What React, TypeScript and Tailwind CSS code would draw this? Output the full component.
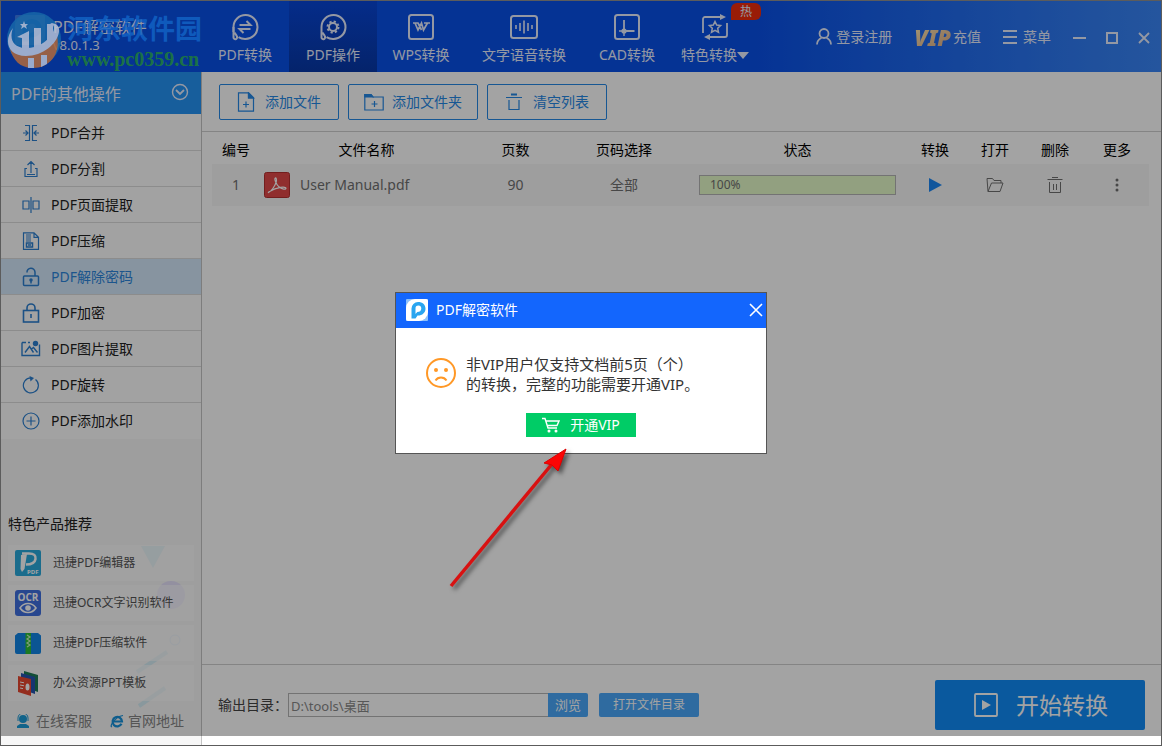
import { useState, type ReactNode } from 'react';
import { clsx } from 'clsx';

type IconProps = { className?: string };

const stroke = {
  fill: 'none',
  stroke: 'currentColor',
  strokeWidth: 1.2,
};

/* ---------- Top bar icons ---------- */

const ConvertIcon = () => (
  <svg viewBox="0 0 28 28" className="h-7 w-7" {...stroke} strokeWidth={2}>
    <path d="M2.500 19v-5A12 12 0 1 1 14 26c-2.400 0-4.600-.7-6.500-1.900" />
    <path d="M2.500 14v10.500a1.800 1.800 0 1 0 3.500-.7c0-1.500-1.600-2.800-2.600-4.300" />
    <path d="M8.500 12h11l-4-4M19.500 16h-11l4 4" />
  </svg>
);

const OperateIcon = () => (
  <svg viewBox="0 0 28 28" className="h-7 w-7" {...stroke} strokeWidth={2}>
    <path d="M2.500 14A12 12 0 1 1 14 26c-2.400 0-4.600-.7-6.500-1.900" />
    <path d="M2.500 14v10.500a1.800 1.800 0 1 0 3.500-.7c0-1.500-1.600-2.800-2.600-4.300" />
    <circle cx="14" cy="14" r="4" />
    <circle cx="14" cy="14" r="5.500" strokeDasharray="2.200 2.120" />
  </svg>
);

const WpsIcon = () => (
  <svg viewBox="0 0 28 28" className="h-7 w-7" {...stroke} strokeWidth={2}>
    <rect x="2" y="2" width="24" height="24" rx="2.500" />
    <path d="M6 10h5.500M17 10h6M8 10l3 7 3.500-7 2 7 4-7M11 10l3.500 7" strokeWidth={1.700} />
  </svg>
);

const VoiceIcon = () => (
  <svg viewBox="0 0 28 28" className="h-7 w-7" {...stroke} strokeWidth={2}>
    <rect x="1" y="3" width="26" height="22" rx="2.500" />
    <path d="M6 12v4M10 10v8M14 7.500v13M18 10v8M22 12v4" strokeWidth={1.600} />
  </svg>
);

const CadIcon = () => (
  <svg viewBox="0 0 28 28" className="h-7 w-7" {...stroke} strokeWidth={2}>
    <rect x="2" y="2" width="24" height="24" rx="2.500" />
    <path d="M11 7v11h10.500" strokeWidth={1.800} />
    <circle cx="11" cy="18" r="2.600" fill="currentColor" stroke="none" />
    <path d="M6 18h5v5" strokeWidth={1.400} />
  </svg>
);

const SpecialIcon = () => (
  <svg viewBox="0 0 28 28" className="h-7 w-7" {...stroke} strokeWidth={2}>
    <path d="M2 20V6a2 2 0 0 1 2-2h16M26 10v12a2 2 0 0 1-2 2H8" strokeWidth={1.800} />
    <path d="M19 1l6 3-6 3zM9 21l-6 3 6 3z" fill="currentColor" stroke="none" />
    <path d="M14 8.500l1.700 3.600 3.900.5-2.900 2.700.8 3.900-3.500-1.900-3.500 1.900.8-3.900-2.900-2.700 3.900-.5z" strokeWidth={1.500} />
  </svg>
);

const UserIcon = () => (
  <svg viewBox="0 0 16 17" className="h-[17px] w-4" {...stroke} strokeWidth={1.800}>
    <circle cx="8" cy="5.500" r="4.500" />
    <path d="M1 16.500c0-3.500 2-5.500 4.500-6.800M15 16.500c0-3.500-2-5.500-4.500-6.800" />
  </svg>
);

/* ---------- Sidebar icons ---------- */

const MergeIcon = () => (
  <svg viewBox="0 0 18 18" className="h-[18px] w-[18px]" {...stroke}>
    <path d="M3 1.500h4.500v15H3M15 1.500h-4.500v15H15M1 9h4.500M17 9h-4.500M3.500 6.500L6 9l-2.500 2.500M14.500 6.500L12 9l2.500 2.500" />
  </svg>
);

const SplitIcon = () => (
  <svg viewBox="0 0 18 18" className="h-[18px] w-[18px]" {...stroke}>
    <path d="M5 8.500H3v8h12v-8h-2M9 13V1.500M5.500 5L9 1.500 12.500 5M5 14.500h8" />
  </svg>
);

const ExtractIcon = () => (
  <svg viewBox="0 0 18 18" className="h-[18px] w-[18px]" {...stroke}>
    <path d="M1 5h6v8H1zM11 5h6v8h-6zM9 1v16" />
  </svg>
);

const CompressIcon = () => (
  <svg viewBox="0 0 18 18" className="h-[18px] w-[18px]" {...stroke}>
    <path d="M1.500.8h10.500l4.500 4.500v12H1.500zM12 .8v4.500h4.500" />
    <path d="M4 3h5M4 5h5M4 7h5M4 9h5" strokeWidth={1.200} />
    <path d="M4.500 11h6v4h-6zM6 13h3" strokeWidth={1.500} />
  </svg>
);

const UnlockIcon = () => (
  <svg viewBox="0 0 18 18" className="h-5 w-[18px]" {...stroke} strokeWidth={1.500}>
    <rect x="1.500" y="8" width="15" height="9.500" rx="1" />
    <path d="M5 4.500a4 4 0 0 1 8-.5v4M9 12.500v3" />
    <circle cx="9" cy="12" r="1" fill="currentColor" />
  </svg>
);

const LockIcon = () => (
  <svg viewBox="0 0 18 20" className="h-5 w-[18px]" {...stroke} strokeWidth={1.600}>
    <rect x="1.500" y="7.500" width="15" height="11.500" />
    <path d="M5 7.500V5a4 4 0 0 1 8 0v2.500M9 11v4" />
  </svg>
);

const PictureIcon = () => (
  <svg viewBox="0 0 20 18" className="h-[18px] w-5" {...stroke} strokeWidth={1.400}>
    <path d="M1 2.500v13h17.500v-11M5 2.500H1M9 2.500H7M4 12.500l4.500-6 4 6M10.500 9l2-1.500 4 5" />
    <circle cx="14.500" cy="3.500" r="2.700" fill="currentColor" stroke="none" />
  </svg>
);

const RotateIcon = () => (
  <svg viewBox="0 0 18 18" className="h-[18px] w-[18px]" {...stroke}>
    <path d="M13.500 3.500A7.500 7.500 0 1 1 9 1.900" />
    <path d="M7.500 0l4.500 2-3.500 3.500z" fill="currentColor" stroke="none" />
  </svg>
);

const PlusCircleIcon = () => (
  <svg viewBox="0 0 18 18" className="h-[18px] w-[18px]" {...stroke}>
    <circle cx="9" cy="9" r="8" />
    <path d="M9 4.500v9M4.500 9h9" />
  </svg>
);

/* ---------- Toolbar and table icons ---------- */

const AddFileIcon = () => (
  <svg viewBox="0 0 18 20" className="h-5 w-[18px]" {...stroke}>
    <path d="M1.500.8h10l5 5v13.400h-15zM11.500.8v5h5M9 9.500v6M6 12.500h6" />
    <path d="M11.500.8v5h5z" fill="currentColor" />
  </svg>
);

const AddFolderIcon = () => (
  <svg viewBox="0 0 20 18" className="h-[18px] w-5" {...stroke}>
    <path d="M.8 1.500v15.500h18.400V4H9L7 1.500zM10.500 8v6M7.500 11h6" />
    <path d="M.8 1.500H7L9 4H.8z" fill="currentColor" />
  </svg>
);

const ClearIcon = () => (
  <svg viewBox="0 0 18 18" className="h-[18px] w-[18px]" {...stroke}>
    <path d="M1 4.500h16M4 7v9.500h10V7" />
    <path d="M6 1.500h6" strokeWidth={2} />
  </svg>
);

const PdfIcon = () => (
  <svg viewBox="0 0 26 26" className="h-[26px] w-[26px] shrink-0">
    <rect x=".5" y=".5" width="25" height="25" rx="2" fill="#e14848" stroke="#b53030" />
    <path
      d="M4.500 20.500c2.500-1 6.500-6 7.800-11 .5-2-.2-4-1-3.500-1.300.8.800 6.500 4.200 9.300 2.500 2 6.500 2.500 6.500 1 0-2-9-1.400-16.500 3.200-.8.500-1.400 1.200-1 1z"
      fill="none"
      stroke="#fff"
      strokeWidth="1.200"
    />
  </svg>
);

const FolderOpenIcon = () => (
  <svg viewBox="0 0 18 16" className="mx-auto h-4 w-[18px]" {...stroke} strokeWidth={1}>
    <path d="M2 14.500l-1-13h5.500l1.500 2h7v2.500M2 14.500L5.500 6h11.500l-3 8.500z" />
  </svg>
);

const TrashIcon = () => (
  <svg viewBox="0 0 16 18" className="mx-auto h-[18px] w-4" {...stroke} strokeWidth={1}>
    <path d="M.5 3.500h15M5 1.500h6M2.500 6v10.500h11V6M6.500 8v6M9.500 8v6" />
  </svg>
);

/* ---------- Product icons ---------- */

const EditorLogo = () => (
  <svg viewBox="0 0 26 26" className="h-[26px] w-[26px]">
    <rect width="26" height="26" rx="2" fill="#2aa9dc" />
    <path d="M7 3.500h7c5 0 7 2 6.500 5.500-.5 3.500-4 5.500-9.500 5.500" fill="none" stroke="#fff" strokeWidth="2.500" />
    <path d="M6 5l6-1-2.500 15L7 22l-1.500-3z" fill="#fff" />
    <text x="12" y="24" fontSize="6" fontWeight="700" fontFamily="Open Sans" fill="#fff">PDF</text>
  </svg>
);

const OcrLogo = () => (
  <svg viewBox="0 0 26 26" className="h-[26px] w-[26px]">
    <rect width="26" height="26" rx="3" fill="#3f6fe0" />
    <text x="13" y="10.500" textAnchor="middle" fontSize="10" fontWeight="700" fontFamily="Open Sans" fill="#fff">OCR</text>
    <path d="M5 18c4-6 12-6 16 0-4 6-12 6-16 0z" fill="none" stroke="#fff" strokeWidth="1.600" />
    <circle cx="13" cy="18" r="2.800" fill="#fff" />
  </svg>
);

const ZipLogo = () => (
  <svg viewBox="0 0 26 26" className="h-[26px] w-[26px]">
    <path d="M0 5.500l3-2.500h20l3 2.500V22a2 2 0 0 1-2 2H2a2 2 0 0 1-2-2z" fill="#1285e6" />
    <path d="M10.500 3H16v21h-5.500z" fill="#2dbf36" />
    <path d="M12 5l3 2-3 2 3 2-3 2 3 2-3 2" fill="none" stroke="#c5f4c4" strokeWidth="1.200" />
  </svg>
);

const PptLogo = () => (
  <svg viewBox="0 0 26 26" className="h-[26px] w-[26px]">
    <path d="M9 1l14 4v17L9 17z" fill="#1d7b55" />
    <path d="M6 3l14 4v17L6 19z" fill="#2453b0" />
    <path d="M3 6l13 3v17L3 22z" fill="#e8472f" />
    <path d="M5 12l4 .8M5 15l4 .8M5 18l3 .6" stroke="#fff" strokeWidth="1" />
    <ellipse cx="12.500" cy="17" rx="2" ry="3.500" fill="#fff" />
  </svg>
);

const PLogo = ({ className }: IconProps) => (
  <svg viewBox="0 0 22 22" className={className}>
    <rect width="22" height="22" rx="1" fill="#8dc0fa" />
    <path d="M0 20V9a9 9 0 0 1 9-9h11a2 2 0 0 1 2 2v11a9 9 0 0 1-9 9H2a2 2 0 0 1-2-2z" fill="#fff" />
    <path d="M5.500 19.500V9.500a6.500 6.500 0 0 1 6.500-6.500c4.500 0 7.500 2.700 7.500 6.700s-3.300 7-8 6.800l-2 3z" fill="#2aa5f0" />
    <path d="M9.500 15V9.700a3 3 0 0 1 3-3.200c1.700 0 2.800 1.200 2.800 2.900 0 2.300-1.700 3.600-4 3.600z" fill="#fff" />
  </svg>
);

const tabs = [
  { label: 'PDF转换', icon: <ConvertIcon /> },
  { label: 'PDF操作', icon: <OperateIcon /> },
  { label: 'WPS转换', icon: <WpsIcon /> },
  { label: '文字语音转换', icon: <VoiceIcon />, wide: true },
  { label: 'CAD转换', icon: <CadIcon /> },
  { label: '特色转换', icon: <SpecialIcon />, hot: true },
];

const operations = [
  { label: 'PDF合并', icon: <MergeIcon /> },
  { label: 'PDF分割', icon: <SplitIcon /> },
  { label: 'PDF页面提取', icon: <ExtractIcon /> },
  { label: 'PDF压缩', icon: <CompressIcon /> },
  { label: 'PDF解除密码', icon: <UnlockIcon /> },
  { label: 'PDF加密', icon: <LockIcon /> },
  { label: 'PDF图片提取', icon: <PictureIcon /> },
  { label: 'PDF旋转', icon: <RotateIcon /> },
  { label: 'PDF添加水印', icon: <PlusCircleIcon /> },
];

const products = [
  { label: '迅捷PDF编辑器', icon: <EditorLogo /> },
  { label: '迅捷OCR文字识别软件', icon: <OcrLogo /> },
  { label: '迅捷PDF压缩软件', icon: <ZipLogo /> },
  { label: '办公资源PPT模板', icon: <PptLogo /> },
];

const columns = ['编号', '文件名称', '页数', '页码选择', '状态', '转换', '打开', '删除', '更多'];

function ToolButton({ icon, label, wide }: { icon: ReactNode; label: string; wide?: boolean }) {
  return (
    <button
      className={clsx(
        'flex h-9 items-center justify-center rounded-xs border border-[#2588e6] text-[#2588e6]',
        wide ? 'w-[130px] gap-2' : 'w-[120px] gap-2.5'
      )}
    >
      {icon}
      {label}
    </button>
  );
}

function TopBar() {
  const [current, setCurrent] = useState('PDF操作');

  return (
    <header className="flex h-[71px] shrink-0 bg-linear-to-r from-[#0950e8] from-65% to-[#3a86f7] text-[#e8eeff]">
      <div className="flex w-[200px] shrink-0 items-start gap-2 pt-3.5 pl-3.5">
        <PLogo className="h-[30px] w-[30px] opacity-40" />
        <div>
          <h1 className="text-base leading-6">PDF解密软件</h1>
          <p className="text-[13px] leading-3">v8.0.1.3</p>
        </div>
      </div>

      <nav className="flex">
        {tabs.map(tab => (
          <button
            key={tab.label}
            onClick={() => setCurrent(tab.label)}
            className={clsx(
              'relative flex flex-col items-center gap-0.5 pt-3 leading-6',
              tab.wide ? 'w-[118px]' : 'w-[88px]',
              current === tab.label && 'bg-linear-to-b from-[#0846d8] to-[#0738a8]'
            )}
          >
            {tab.icon}
            <span className="flex items-center">
              {tab.label}
              {tab.hot && (
                <svg viewBox="0 0 12 7" className="h-[7px] w-3" fill="currentColor">
                  <path d="M0 0h12L6 7z" />
                </svg>
              )}
            </span>
            {tab.hot && (
              <span className="absolute top-0.5 -right-0.5 h-[17px] w-[30px] rounded-md rounded-bl-none bg-[#f02d0c] text-xs leading-[17px]">
                热
              </span>
            )}
          </button>
        ))}
      </nav>

      <div className="ml-auto flex items-center gap-[22px] pr-2.5">
        <button className="flex items-center gap-1">
          <UserIcon />
          登录注册
        </button>
        <button className="flex items-center gap-0.5">
          <span className="bg-linear-to-br from-[#ffe9b5] to-[#e0ad85] bg-clip-text text-[22px] leading-5 font-black text-transparent italic">
            VIP
          </span>
          充值
        </button>
        <button className="flex items-center gap-1.5">
          <svg viewBox="0 0 14 16" className="h-4 w-3.5" {...stroke} strokeWidth={1.800}>
            <path d="M0 2h14M0 8h14M0 14h14" />
          </svg>
          菜单
        </button>
        <div className="flex items-center gap-[18px]">
          <button aria-label="最小化">
            <svg viewBox="0 0 14 14" className="h-3.5 w-3.5" {...stroke} strokeWidth={2}>
              <path d="M0 8h13" />
            </svg>
          </button>
          <button aria-label="最大化">
            <svg viewBox="0 0 14 14" className="h-3.5 w-3.5" {...stroke} strokeWidth={2}>
              <path d="M2 3h10v10H2z" />
            </svg>
          </button>
          <button aria-label="关闭">
            <svg viewBox="0 0 14 14" className="h-3.5 w-3.5" {...stroke} strokeWidth={1.800}>
              <path d="M2 3l10 10M12 3L2 13" />
            </svg>
          </button>
        </div>
      </div>
    </header>
  );
}

function Sidebar() {
  const [active, setActive] = useState('PDF解除密码');

  return (
    <aside className="flex w-[201px] shrink-0 flex-col border-r border-[#c4c4c4] bg-[#f7f7f7]">
      <button className="flex h-[42px] items-center justify-between bg-[#2494f5] pt-0.5 pr-3 pl-2.5 text-base text-[#e8eeff]">
        PDF的其他操作
        <svg viewBox="0 0 18 18" className="mb-1 h-[18px] w-[18px]" {...stroke} strokeWidth={1.400}>
          <circle cx="9" cy="9" r="7.500" />
          <path d="M5 7l4 4 4-4" strokeWidth={1.800} />
        </svg>
      </button>

      <nav className="divide-y divide-[#dcdcdc] bg-[#fefefe] pt-px">
        {operations.map(op => (
          <button
            key={op.label}
            onClick={() => setActive(op.label)}
            className={clsx(
              'flex h-9 w-full items-center pl-5',
              active === op.label ? 'bg-[#d3e8fb] text-[#2c86dc]' : 'text-[#222]'
            )}
          >
            <span className="flex w-5 justify-center text-[#2c7fd0]">{op.icon}</span>
            <span className="ml-2.5">{op.label}</span>
          </button>
        ))}
      </nav>

      <section className="relative mt-auto px-[7px] pb-3.5">
        <svg viewBox="0 0 186 166" className="absolute top-7 left-2 h-[166px] w-[186px]">
          <path d="M132 4h24l-12 22z" fill="#cdeaf4" />
          <circle cx="162" cy="53" r="14" fill="#e6e1fb" />
          <circle cx="166" cy="98" r="5" fill="none" stroke="#d8ebfa" />
          <path d="M128 130l30-20M130 164l26-18" stroke="#d6eef6" strokeWidth="4" />
        </svg>
        <h2 className="leading-5 text-[#222]">特色产品推荐</h2>
        <ul className="relative mt-[11px] space-y-1">
          {products.map(product => (
            <li key={product.label}>
              <a href="#" className="flex h-9 items-center gap-3 bg-white/60 pl-[7px] text-xs text-[#555]">
                {product.icon}
                {product.label}
              </a>
            </li>
          ))}
        </ul>
        <div className="mt-2.5 flex gap-[18px] pl-2 leading-5 text-[#858585]">
          <a href="#" className="flex items-center gap-1.5">
            <svg viewBox="0 0 14 14" className="h-3.5 w-3.5" fill="#1c9bd8">
              <circle cx="7" cy="5" r="4" />
              <path d="M1 14v-2l3-2h6l3 2v2z" />
              <path d="M2 7V4a5 5 0 0 1 10 0v3" fill="none" stroke="#1c9bd8" />
            </svg>
            在线客服
          </a>
          <a href="#" className="flex items-center gap-1">
            <svg viewBox="0 0 14 14" className="h-3.5 w-3.5" fill="none" stroke="#1792dc" strokeWidth="2.200">
              <path d="M11.500 9.800A4.700 4.700 0 1 1 12 7.500H4" />
              <path d="M2 12.500C-1 14 4 3 13 1.500" strokeWidth="1.200" />
            </svg>
            官网地址
          </a>
        </div>
      </section>
    </aside>
  );
}

function FileTable() {
  return (
    <div className="flex-1 pr-3 pl-2.5">
      <table className="w-full table-fixed text-center">
        <colgroup>
          <col className="w-12" />
          <col />
          <col className="w-[85px]" />
          <col className="w-[132px]" />
          <col className="w-[215px]" />
          <col className="w-[60px]" />
          <col className="w-[60px]" />
          <col className="w-[60px]" />
          <col className="w-16" />
        </colgroup>
        <thead>
          <tr className="h-8">
            {columns.map(column => (
              <th key={column} className="pt-1 font-normal text-black">{column}</th>
            ))}
          </tr>
        </thead>
        <tbody>
          <tr className="h-[42px] bg-[#f7f7f7] text-[#707070]">
            <td>1</td>
            <td>
              <span className="flex items-center gap-2.5 pl-1">
                <PdfIcon />
                User Manual.pdf
              </span>
            </td>
            <td>90</td>
            <td>全部</td>
            <td className="px-[9px]">
              <div className="h-5 border border-[#b5b5b5] bg-[#e5fac8] pl-2.5 text-left text-xs leading-[18px]">100%</div>
            </td>
            <td>
              <button aria-label="转换" className="block w-full">
                <svg viewBox="0 0 14 16" className="mx-auto h-4 w-3.5" fill="#1c87f5">
                  <path d="M1 1l13 7-13 7z" />
                </svg>
              </button>
            </td>
            <td>
              <button aria-label="打开" className="block w-full"><FolderOpenIcon /></button>
            </td>
            <td>
              <button aria-label="删除" className="block w-full"><TrashIcon /></button>
            </td>
            <td>
              <button aria-label="更多" className="block w-full">
                <svg viewBox="0 0 4 14" className="mx-auto h-3.5 w-1" fill="currentColor">
                  <circle cx="2" cy="2" r="1.500" />
                  <circle cx="2" cy="7" r="1.500" />
                  <circle cx="2" cy="12" r="1.500" />
                </svg>
              </button>
            </td>
          </tr>
        </tbody>
      </table>
    </div>
  );
}

function OutputBar() {
  return (
    <footer className="flex h-[81px] shrink-0 items-center border-t border-[#cfcfcf] pr-4 pl-4">
      <label htmlFor="output" className="text-[#444]">输出目录：</label>
      <input
        id="output"
        defaultValue="D:\tools\桌面"
        className="h-6 w-[260px] border border-r-0 border-[#b5b5b5] bg-transparent px-0.5 text-[13px] text-[#888]"
      />
      <button className="h-6 w-10 rounded-r-xs bg-[#4aa8fb] text-[13px] text-white">浏览</button>
      <button className="ml-[11px] h-6 w-[100px] rounded-xs bg-[#4aa8fb] text-xs text-white">打开文件目录</button>
      <button className="ml-auto flex h-[50px] w-[210px] items-center justify-center gap-[18px] rounded-xs bg-[#108cf7] pl-0.5 text-[23px] text-white">
        <svg viewBox="0 0 24 24" className="h-6 w-6" {...stroke} strokeWidth={1.800}>
          <rect x="1" y="1" width="22" height="22" rx="1" />
          <path d="M8 7l9 5-9 5z" fill="currentColor" stroke="none" />
        </svg>
        开始转换
      </button>
    </footer>
  );
}

function Watermark() {
  return (
    <div className="pointer-events-none absolute top-2.5 left-1 flex">
      <svg viewBox="0 0 58 58" className="h-[58px] w-[58px] opacity-85">
        <circle cx="29" cy="28" r="27" fill="#1767a8" />
        <path d="M5 38c12 8 32 6 47-14 4 20-8 33-24 33C15 57 8 49 5 38z" fill="#b0683b" />
        <path
          d="M8 17C-2 30 3 45 21 45c17 0 31-12 33-24 1-6-3-9-9-9 5 2 5 6 2 11-6 9-17 15-27 14C8 36 4 28 8 17z"
          fill="#b4c0d6"
        />
        <path d="M12 26l12-6v18h-7V27zM29 17h7v21h-7zM42 13h6v14l-6 6zM23 47h6v10h-6zM36 44h6v9l-6 3z" fill="#b4c0d6" />
        <path d="M19 10l1 3h3l-2 2 1 3-3-2-3 2 1-3-2-2h3z" fill="#b4c0d6" />
      </svg>
      <div className="pl-1">
        <p className="text-[27px] leading-9 font-bold text-[#1265c8]/80">河东软件园</p>
        <p className="font-['Liberation_Serif',serif] text-xl leading-6 font-bold text-[#1f7a3c]/90">www.pc0359.cn</p>
      </div>
    </div>
  );
}

function VipDialog() {
  return (
    <div role="dialog" aria-labelledby="dialog-title" className="relative w-[372px] border border-[#555] bg-white">
      <div className="flex h-[35px] items-center gap-2 bg-[#1366fd] pr-[3px] pb-px pl-2.5 text-white">
        <PLogo className="h-[22px] w-[22px]" />
        <h2 id="dialog-title">PDF解密软件</h2>
        <button aria-label="关闭" className="ml-auto">
          <svg viewBox="0 0 14 14" className="h-3.5 w-3.5" {...stroke} strokeWidth={1.600}>
            <path d="M1 1l12 12M13 1L1 13" />
          </svg>
        </button>
      </div>
      <div className="flex gap-2.5 px-[30px] pt-[26px] text-[15px] leading-5 text-[#333]">
        <svg viewBox="0 0 30 30" className="mt-1 h-[30px] w-[30px] shrink-0" fill="none" stroke="#ff9826" strokeWidth="2">
          <circle cx="15" cy="15" r="14" />
          <path d="M9.500 22.500c2.500-4 8.500-4 11 0" />
          <circle cx="10" cy="12" r="2" fill="#ff9826" stroke="none" />
          <circle cx="20" cy="12" r="2" fill="#ff9826" stroke="none" />
        </svg>
        <p>
          非VIP用户仅支持文档前5页（个）
          <br />
          的转换，完整的功能需要开通VIP。
        </p>
      </div>
      <button className="mx-auto mt-[19px] mb-4 flex h-6 w-[110px] items-center justify-center gap-2.5 bg-[#00cc66] text-white">
        <svg viewBox="0 0 18 16" className="h-4 w-[18px]" {...stroke} strokeWidth={1.400}>
          <path d="M0 1.500h3l3 9.500h9M4 4h13l-2 4.500H5.500" />
          <circle cx="7" cy="14" r=".8" />
          <circle cx="14" cy="14" r=".8" />
        </svg>
        开通VIP
      </button>

      {/* Red pointer towards the VIP button */}
      <svg
        viewBox="0 0 130 150"
        className="pointer-events-none absolute top-[152px] left-[50px] h-[150px] w-[130px] drop-shadow-[3px_3px_2px_rgba(0,0,0,0.5)]"
      >
        <path d="M5 141L106 19" stroke="#d81212" strokeWidth="3.500" />
        <path d="M120 4L112 26 106 20 98 18z" fill="#fa0505" stroke="#d00" strokeWidth="1" />
      </svg>
    </div>
  );
}

export default function App() {
  return (
    <div className="relative flex h-screen flex-col border border-[#5c5c5c] bg-white font-['Noto_Sans','Noto_Sans_CJK_SC',sans-serif] text-sm">
      <TopBar />
      <div className="flex min-h-0 flex-1">
        <Sidebar />
        <main className="flex min-w-0 flex-1 flex-col">
          <div className="flex h-[60px] shrink-0 items-start gap-[9px] border-b border-[#cfcfcf] pt-3 pl-[17px]">
            <ToolButton icon={<AddFileIcon />} label="添加文件" />
            <ToolButton icon={<AddFolderIcon />} label="添加文件夹" wide />
            <ToolButton icon={<ClearIcon />} label="清空列表" />
          </div>
          <FileTable />
          <OutputBar />
        </main>
      </div>

      {/* Modal shade, the last strip of the window stays uncovered */}
      <div className="absolute inset-x-0 top-0 bottom-[9px] bg-black/36" />
      <Watermark />
      <div className="absolute inset-0 flex items-center justify-center">
        <VipDialog />
      </div>
    </div>
  );
}
